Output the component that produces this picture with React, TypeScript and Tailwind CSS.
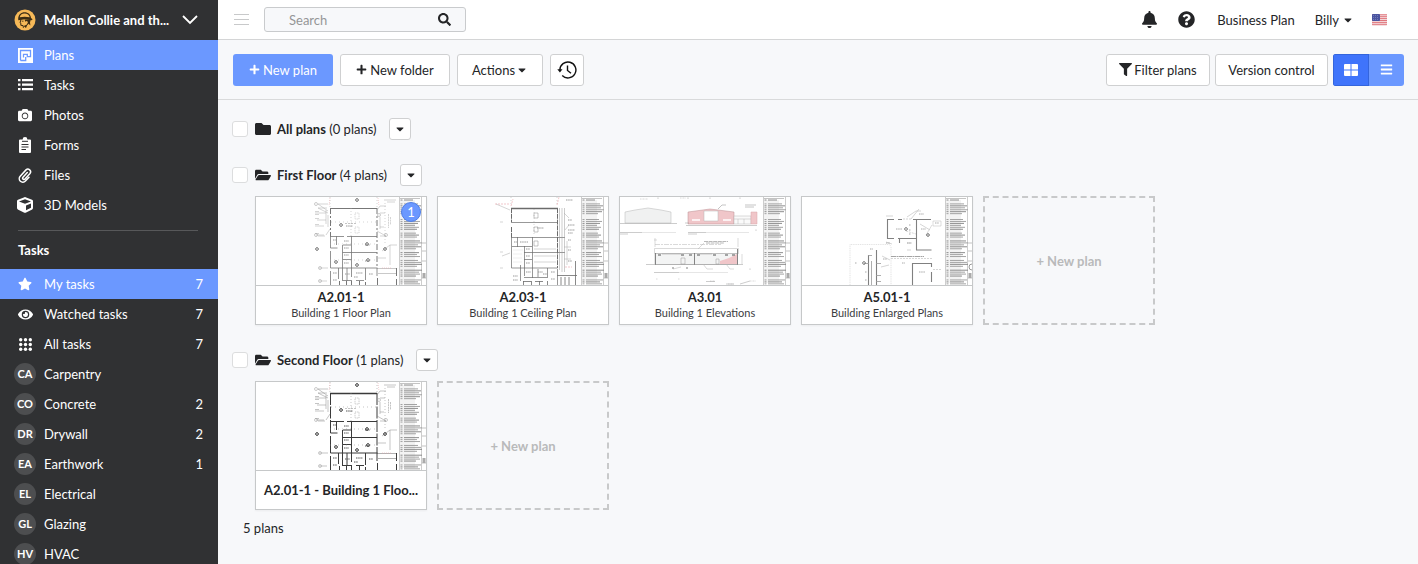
import clsx from 'clsx'
import React from 'react'
import {
  FaBars,
  FaBell,
  FaCamera,
  FaCaretDown,
  FaCube,
  FaEye,
  FaFilter,
  FaFolder,
  FaFolderOpen,
  FaPlus,
  FaQuestionCircle,
  FaSearch,
  FaStar
} from 'react-icons/fa'

const PlansIcon = () => (
  <svg width="15" height="15" viewBox="0 0 15 15" fill="none" aria-hidden="true">
    <rect width="15" height="15" fill="#fff" />
    <path
      d="M2.500 12.500v-10h10v6.200H9.300V6.300H5.500v3.200M2.500 12.500h5.200V9"
      stroke="#6b98ff"
      strokeWidth="1.300"
    />
  </svg>
)

const ListIcon = () => (
  <svg width="15" height="12" viewBox="0 0 15 12" fill="#fff" aria-hidden="true">
    <path d="M0 0h2.500v2.200H0zM4 0h11v2.200H4zM0 4.500h2.500v2.200H0zM4 4.500h11v2.200H4zM0 9h2.500v2.200H0zM4 9h11v2.200H4z" />
  </svg>
)

const FormsIcon = () => (
  <svg width="12" height="16" viewBox="0 0 12 16" aria-hidden="true">
    <path d="M1 2.500h2.600a2.400 2.400 0 0 1 4.800 0H11a1 1 0 0 1 1 1V15a1 1 0 0 1-1 1H1a1 1 0 0 1-1-1V3.500a1 1 0 0 1 1-1z" fill="#fff" />
    <path d="M3 4.300h6M2.500 7.500h7M2.500 10h7M2.500 12.500h4.500" stroke="#303133" strokeWidth="1" />
  </svg>
)

const ClipIcon = () => (
  <svg width="14" height="15" viewBox="0 0 14 15" fill="none" stroke="#fff" strokeLinecap="round" aria-hidden="true">
    <path
      d="M9.300 4.500L5 9.200a1.300 1.300 0 0 0 2 1.800l5-5.500A2.700 2.700 0 0 0 8 1.900L2.200 8.300a3.500 3.500 0 0 0 5.200 4.800L11 9.200"
      strokeWidth="1.500"
    />
  </svg>
)

const GridDotsIcon = () => (
  <svg width="13" height="13" viewBox="0 0 13 13" fill="#fff" aria-hidden="true">
    {[1.7, 6.5, 11.3].map((y) =>
      [1.7, 6.5, 11.3].map((x) => <circle key={`${x}-${y}`} cx={x} cy={y} r="1.700" />)
    )}
  </svg>
)

const TilesIcon = () => (
  <svg width="14" height="12" viewBox="0 0 14 12" fill="#fff" aria-hidden="true">
    <path d="M1 0h5.500v5.500H0V1a1 1 0 0 1 1-1zM7.500 0H13a1 1 0 0 1 1 1v4.500H7.500zM0 6.500h6.500V12H1a1 1 0 0 1-1-1zM7.500 6.500H14V11a1 1 0 0 1-1 1H7.500z" />
  </svg>
)

const HistoryIcon = () => (
  <svg width="20" height="18" viewBox="0 0 20 18" fill="none" stroke="#111" aria-hidden="true">
    <path d="M2.900 9A8 8 0 1 1 5.200 14.600" strokeWidth="1.400" />
    <path d="M0.300 8.300h5.200L2.900 11.500z" fill="#111" stroke="none" />
    <path d="M10.500 4.500v5l3.500 2.800" strokeWidth="1.400" />
  </svg>
)

const FlagIcon = () => (
  <svg width="15" height="12" viewBox="0 0 15 12" aria-hidden="true">
    <rect width="15" height="12" rx="1" fill="#f5dfe1" />
    <path d="M0 .8h15M0 2.700h15M0 4.600h15M0 6.500h15M0 8.400h15M0 10.300h15" stroke="#e0767d" strokeWidth="1" />
    <rect width="8" height="7" rx="1" fill="#4a55a0" />
    <path d="M1 1.500h6M1 3.500h6M1 5.500h6" stroke="#8c93c8" strokeWidth=".6" strokeDasharray="1 1" />
  </svg>
)

const ProjectLogo = () => (
  <svg width="22" height="22" viewBox="0 0 22 22" className="shrink-0" aria-hidden="true">
    <circle cx="11" cy="11" r="10.500" fill="#f6b958" />
    <path d="M4.200 9.600C4.400 5.600 7 3.200 10.600 3.200s6.200 2.300 6.400 5.900l1.600 1.200-1 .9-6.600-.9-6.700 1z" fill="#3a2c14" />
    <path d="M5.700 8.300c.4-2.300 2.100-3.800 4.800-3.800 2.900 0 4.800 1.500 5.200 3.800l-5-.6z" fill="#f6b958" />
    <path d="M7 10.500l-1 3.300.9.500-.1 2 2.300.3.300 2.200" fill="none" stroke="#3a2c14" strokeWidth="1" />
    <path d="M10.500 10.500l1 2.200 1.500-.9.900 1.600-1.300 2.400-3 1.100L12 19l1-2.500 1.600-1.700 1.800 1.600-.4-3 .8-2.900z" fill="#3a2c14" />
    <path d="M7.800 12.200h1.700" stroke="#3a2c14" strokeWidth=".8" />
  </svg>
)

interface NavItem {
  label: string
  icon?: React.ReactNode
  initials?: string
  count?: number
  active?: boolean
}

const mainNav: NavItem[] = [
  { label: 'Plans', icon: <PlansIcon />, active: true },
  { label: 'Tasks', icon: <ListIcon /> },
  { label: 'Photos', icon: <FaCamera size={14} /> },
  { label: 'Forms', icon: <FormsIcon /> },
  { label: 'Files', icon: <ClipIcon /> },
  { label: '3D Models', icon: <FaCube size={16} /> }
]

const taskNav: NavItem[] = [
  { label: 'My tasks', icon: <FaStar size={14} />, count: 7, active: true },
  { label: 'Watched tasks', icon: <FaEye size={15} />, count: 7 },
  { label: 'All tasks', icon: <GridDotsIcon />, count: 7 },
  { label: 'Carpentry', initials: 'CA' },
  { label: 'Concrete', initials: 'CO', count: 2 },
  { label: 'Drywall', initials: 'DR', count: 2 },
  { label: 'Earthwork', initials: 'EA', count: 1 },
  { label: 'Electrical', initials: 'EL' },
  { label: 'Glazing', initials: 'GL' },
  { label: 'HVAC', initials: 'HV' }
]

const NavLink: React.FC<{ item: NavItem }> = ({ item }) => (
  <a
    href="#"
    className={clsx(
      'flex h-[30px] items-center pr-[15px] pl-[14px]',
      item.active && 'bg-[#6b98ff]'
    )}
  >
    <span
      className={clsx(
        'flex size-[22px] shrink-0 items-center justify-center rounded-full',
        item.initials && 'bg-[#4d4e50] text-[11px] font-bold'
      )}
    >
      {item.icon ?? item.initials}
    </span>
    <span className="ml-2 flex-1">{item.label}</span>
    {item.count && <span>{item.count}</span>}
  </a>
)

const Sidebar = () => (
  <aside className="sticky top-0 h-screen w-[218px] shrink-0 overflow-hidden bg-[#303133] text-white">
    <button className="flex h-10 w-full items-center pr-5 pl-[14px] text-left font-bold">
      <ProjectLogo />
      <span className="ml-2 flex-1 whitespace-nowrap">Mellon Collie and th...</span>
      <svg width="16" height="10" viewBox="0 0 16 10" fill="none" aria-hidden="true">
        <path d="M1 1l7 7 7-7" stroke="#fff" strokeWidth="1.800" />
      </svg>
    </button>
    <nav>
      {mainNav.map((item) => (
        <NavLink key={item.label} item={item} />
      ))}
    </nav>
    <hr className="mt-[10px] mr-5 ml-[18px] border-[#57585a]" />
    <h2 className="flex h-[38px] items-center pl-[18px] font-bold">Tasks</h2>
    <nav>
      {taskNav.map((item) => (
        <NavLink key={item.label} item={item} />
      ))}
    </nav>
  </aside>
)

const TopBar = () => (
  <header className="flex h-10 items-center border-b border-[#d4d5d6] bg-white pr-[31px] pl-4">
    <button aria-label="Toggle menu">
      <svg width="15" height="12" viewBox="0 0 15 12" stroke="#c8c9ca" aria-hidden="true">
        <path d="M0 .5h15M0 5.500h15M0 10.500h15" />
      </svg>
    </button>
    <label className="ml-[15px] flex h-[25px] w-[202px] items-center rounded-[3px] border border-[#c9cbcd] bg-[#f7f8fa] pr-[14px] pl-6">
      <input
        type="text"
        placeholder="Search"
        aria-label="Search"
        className="w-0 flex-1 outline-none placeholder:text-[#959697]"
      />
      <FaSearch size={13} />
    </label>
    <div className="ml-auto flex items-center">
      <button aria-label="Notifications">
        <FaBell size={17} />
      </button>
      <button aria-label="Help" className="ml-5">
        <FaQuestionCircle size={17} />
      </button>
      <a href="#" className="ml-[22px]">
        Business Plan
      </a>
      <button className="ml-5 flex items-center gap-[3px]">
        Billy
        <FaCaretDown size={12} />
      </button>
      <button aria-label="Language" className="ml-[18px]">
        <FlagIcon />
      </button>
    </div>
  </header>
)

const outlineButton =
  'flex h-8 items-center justify-center rounded-[3px] border border-[#cfd0d1] bg-white'

const Toolbar = () => (
  <div className="flex h-[60px] items-center border-b border-[#d9dadb] pr-[14px] pl-[15px]">
    <div className="flex gap-[7px]">
      <button className="flex h-8 w-[100px] items-center justify-center gap-[3px] rounded-[3px] bg-[#6b98ff] text-white">
        <FaPlus size={11} />
        New plan
      </button>
      <button className={clsx(outlineButton, 'w-[110px] gap-[3px]')}>
        <FaPlus size={11} />
        New folder
      </button>
      <button className={clsx(outlineButton, 'w-[86px] gap-px')}>
        Actions
        <FaCaretDown size={12} />
      </button>
      <button aria-label="History" className={clsx(outlineButton, 'w-[34px]')}>
        <HistoryIcon />
      </button>
    </div>
    <div className="ml-auto flex gap-[5px]">
      <button className={clsx(outlineButton, 'w-[104px] gap-[2px]')}>
        <FaFilter size={13} />
        Filter plans
      </button>
      <button className={clsx(outlineButton, 'w-[113px]')}>Version control</button>
      <div className="flex h-8 overflow-hidden rounded-[3px] text-white">
        <button
          aria-label="Grid view"
          className="flex w-9 items-center justify-center border border-[#3465dc] bg-[#3f74fb]"
        >
          <TilesIcon />
        </button>
        <button aria-label="List view" className="flex w-[35px] items-center justify-center bg-[#6b98ff]">
          <FaBars size={13} />
        </button>
      </div>
    </div>
  </div>
)

// Line widths of the general notes printed down the right side of a sheet
const noteWidths = [
  9, 0, 14, 17, 15, 18, 16, 12, 0, 0, 13, 16, 14, 11, 15, 13, 0, 12, 15, 13, 0, 16, 18, 14, 17, 12,
  0, 15, 13, 16, 0, 14, 17, 18, 13, 0, 18, 15, 16, 12, 0, 17, 14, 16
]

const SheetNotes = () => (
  <g>
    <rect x="144" y="3" width="15" height="83" fill="#f3f3f3" />
    <path d="M143.500 0v88M165.500 0v88" stroke="#cdcdcd" />
    <path d="M144 1.500h20" stroke="#aaa" strokeWidth=".7" />
    {noteWidths.map((w, i) => (
      <path
        key={i}
        d={`M144.500 ${3 + i * 1.95}h2M148 ${3 + i * 1.95}h${w}`}
        stroke={i % 3 === 0 ? '#808080' : '#9a9a9a'}
        strokeWidth=".9"
        visibility={w ? 'visible' : 'hidden'}
      />
    ))}
    <path d="M166 46h4M166 54h4M166 64h4M166 81h4" stroke="#aaa" strokeWidth=".7" />
    <rect x="166.500" y="76" width="3" height="5" fill="#aaa" />
  </g>
)

const Target: React.FC<{ x: number; y: number }> = ({ x, y }) => (
  <path
    d={`M${x - 2} ${y}l2-2 2 2-2 2zM${x - 2} ${y}h4M${x} ${y - 2}v4`}
    strokeWidth=".6"
    fill="none"
  />
)

const FloorPlanDrawing: React.FC<{ dark?: boolean }> = ({ dark }) => (
  <g stroke={dark ? '#3a3a3a' : '#777'} fill="none">
    <path d="M74 11.500h47" strokeWidth={dark ? 1.4 : 1.2} />
    <path d="M74.500 11v28M121 11v60" strokeWidth="1" strokeDasharray={dark ? '12 1.5' : '6 2 2 2'} />
    <path
      d="M74 39.500h14M91 39.500h30M95.500 39v16M80.500 39v9M74.500 39v12h7M87 48h8M86.500 48v26M95 55.500h26M86.500 55.500h9M95.500 55v16M74.500 54v17h47M86.500 62.500h9M82.500 71v11M86.500 74v10M91 71v13M95.500 71v9M109.500 71v12M121 71v8M74.500 74v14M87 83.500h9M100 83.500h8"
      strokeWidth={dark ? 1 : 0.8}
    />
    <path d="M83.500 84v4M90.500 84v4M95.500 84v4M103.500 84v4M109.500 85v3M121.500 81v7M140.500 71v8M140.500 82v6" strokeWidth="1" />
    <path d="M122 76.500h18M121 71.500h19" strokeWidth=".4" />
    <g stroke={dark ? '#888' : '#aaa'} strokeWidth=".5">
      <path d="M74 0v10M121 0v10M129 6v40M95 11v28" strokeDasharray="1 2" />
      <path d="M62 7h10M62 11h9M59 16h11M61 23h9M59 29h9M62 39h7M60 38h8M63 71h9M63 84h8" />
      <path d="M124 9h6M124 16h5M124 30h4M124 39h6M128 3h12M131 5h8M122 61h8M134 48h7" />
      <path d="M62 7l10 7M62 11l10 5M70 38l4-6M124 9l-3 4M130 39l-9-5" />
      <path d="M132.500 17v14M134.500 20v8" strokeDasharray="2 .6" />
      <path d="M75 25h46M74 47h47M74 63h47" strokeDasharray="1 3" />
      <path d="M99 16h4v6h-4zM99 30h4v6h-4z" strokeDasharray="1 .8" />
      <path d="M59 14.500h4M59 17.500h4M59 21.500h4M59 27.500h4M59 36.500h4M70 13v14M72 18v12M124 20v12M126 54l8-6v20" />
    </g>
    <g stroke={dark ? '#555' : '#999'} strokeWidth="1" strokeDasharray="1.500 .7">
      <path d="M90 29h7M77 43h3M88 44h5M88 51h5M109 48h5M88 58h5M88 66h5M109 64h5M100 76h7M89 77h5M77 76h4M113 77h4M77 83h4M98 80h4" />
    </g>
    <path d="M89 26.500h11" stroke="#aaa" strokeDasharray="2 1" strokeWidth=".7" />
    <Target x={85} y={28} />
    <Target x={101} y={3} />
    <Target x={61} y={52} />
    <Target x={129} y={52} />
    <Target x={111} y={47} />
    <Target x={112} y={63} />
    <Target x={80} y={65} />
    <Target x={101} y={68} />
    <g strokeWidth=".5" stroke="#999">
      <circle cx="60" cy="7" r="1.500" />
      <circle cx="60" cy="38" r="1.500" />
      <circle cx="64" cy="71" r="1.500" />
      <circle cx="64" cy="84" r="1.500" />
      <circle cx="130" cy="38" r="1.500" />
      <circle cx="123" cy="18" r="1.500" />
    </g>
    <path d="M74 1l-1 8M122 1l1 8M126 71h10" stroke="#e7a3a8" strokeWidth=".5" strokeDasharray="1 1" />
  </g>
)

const CeilingPlanDrawing = () => (
  <g stroke="#6b6b6b" fill="none">
    <path d="M73 11.500h47" strokeWidth="1.400" />
    <path d="M73.500 11v14M73.500 30v10M119.500 11v60" strokeWidth="1" strokeDasharray="5 .8" />
    <path
      d="M73 25.500h46M73 40.500h54M94 55.500h33M94.500 40v31M79.500 40v10M86.500 49v30M73.500 40v31h46M74 49.500h20M86 55.500h8M86 62.500h8M82.500 68v16M86 80.500h24M94.500 71v10M109.500 71v9M100 72v8M119.500 72v16"
      strokeWidth=".7"
    />
    <path d="M121.500 11v62M124 11v64M126.500 11v64" stroke="#999" strokeWidth=".5" />
    <path d="M119 78.500h20M85 84.500h8M97 84.500h8M85.500 84v4M93.500 84v4M101.500 84v4M109.500 84v4M123 80v8M127 80v8M131 80v8M137.500 64v24" strokeWidth=".8" />
    <g stroke="#aaa" strokeWidth=".5">
      <path d="M73 0v9M119 0v9M96 12v26" strokeDasharray="1 2" />
      <path d="M96 16h4v5h-4zM96 30h4v5h-4zM96 44h4v5h-4z" stroke="#888" />
      <path d="M64 59l8-3M62 25h3M62 55h3M62 71h3M58 7l14 6M96 59h22M96 65h22M96 52h22" />
      <path d="M126 16l5 5M127 33l4-5M126 50h7M126 62h7M129 44v24" />
      <path d="M75 53h10M75 57h9M75 61h9M75 65h9" stroke="#ddd" />
    </g>
    <g stroke="#999" strokeWidth="1" strokeDasharray="1.500 .7">
      <path d="M99 31h7M88 52h4M88 59h4M88 66h4M88 75h5M100 75h5M105 77h4M75 79h5M75 83h5M113 75h4M113 82h4M130 23h4M130 28h7M130 33h7M130 36h5M130 43h3M130 53h3M130 64h4M128 3h7M76 45h3M82 45h8" />
    </g>
    <path d="M57 7h15M73 9l2-7M119 8l2-8M127 70h7" stroke="#e7a3a8" strokeWidth=".6" strokeDasharray="2 1" />
  </g>
)

const ElevationsDrawing = () => (
  <g fill="none" stroke="#b5b5b5" strokeWidth=".5">
    <path d="M5 26V15l10-2 13-2 13 2 10 2v11z" fill="#f0f1f1" />
    <path d="M0 26.500h57M0 35.500h22M0 37h8M68 35.500h18M68 37h9" stroke="#999" />
    <path d="M22 35.500h34M86 35.500h43" stroke="#ccc" />
    <path d="M68 27V15l22-3 24 3v12z" fill="#f0c6c9" stroke="#bb8f92" />
    <path d="M84 14h14v10H84z" fill="#fff" />
    <path d="M72 23h8M103 23h8" stroke="#fff" strokeWidth="1.400" />
    <path d="M114 19h17v8h-17z" fill="#fafafa" />
    <path d="M114 22h17M118 22v5M124 22v5" />
    <path d="M131 15h6v12h-6z" fill="#f0c6c9" stroke="#d9a5a9" />
    <path d="M66 28.500h71M65 26h4" stroke="#999" />
    <path d="M98 12l4-4h4M125 8h11M125 10h9" stroke="#888" />
    <path d="M34.500 51.500h84v5h-84z" fill="#fff" />
    <path d="M35 56.500h82v11H35z" fill="#f3f4f4" stroke="#999" />
    <path d="M100 67v-3l9-3 8-4v10z" fill="#f0c6c9" stroke="none" />
    <path d="M35.500 56v12M74.500 56v12M117.500 52v16" stroke="#777" strokeWidth=".9" />
    <path d="M26 67.500h97M34 75.500h25" stroke="#999" />
    <path d="M59 75.500h49" stroke="#ccc" />
    <path d="M38 58h3M61 58h3M69 58h3M77 58h3M93 58h3M105 58h3M112 58h3" stroke="#888" strokeWidth="1.600" />
    <path d="M61 61h4v6h-4zM96 62h3v5h-3zM42 57h19M80 57h12" stroke="#999" />
    <path d="M35 47.500h66" strokeDasharray="5 1 2 1" />
    <path d="M84 44.500h24M86 46h18" stroke="#888" strokeWidth=".6" strokeDasharray="4 .6" />
    <path d="M84 46l-6 6M61 70l-8 2M83 67l4 5h6M106 67l4 5h4M122 57v10M35 41v9M118 41v9M34 43h3" />
    <path d="M20 2h8M60 1h6M36 82h2M58 82h2M90 84h5M108 87h6M130 84h6" strokeDasharray="1 .5" />
    <path d="M86 84.500h9M106 87h8M120 87l10-3" stroke="#999" />
    <g fill="#aaa" stroke="none">
      <circle cx="38" cy="1" r=".6" />
      <circle cx="68" cy="1" r=".6" />
      <circle cx="90" cy="1" r=".6" />
      <circle cx="120" cy="1" r=".6" />
      <circle cx="136" cy="33" r=".6" />
      <circle cx="130" cy="72" r=".6" />
      <circle cx="53" cy="71" r="1" />
      <circle cx="67" cy="71" r="1" />
    </g>
  </g>
)

const EnlargedPlansDrawing = () => (
  <g fill="none" stroke="#808080">
    <path
      d="M92 22.500h-6.500v19H92M96 22.500h4M111 22.500h18M114.500 22v31h15M96 41.500h18M97.500 41v5M66.500 58v30M74.500 53v35M110.500 88V66.500h19V70M129.500 75v10"
      strokeWidth="1.100"
    />
    <path d="M66 58.500h4M62 66.500h5M74 66.500h5M74 78.500h5M69.500 64v24M74 84.500h5" stroke="#999" strokeWidth=".8" />
    <path d="M48 88V47.500h38q3 0 3 3V88" stroke="#ccc" strokeWidth=".6" strokeDasharray="1 .8" />
    <path d="M89 59.500h33" stroke="#999" strokeWidth=".9" strokeDasharray="5 .5 2 .5" />
    <path d="M89 61.500h42M131 72.500h9M101 22h9M104 34l10 3" stroke="#bbb" strokeWidth=".6" strokeDasharray="2 1" />
    <path d="M105 20l9-6h5M109 22l8-10M118 27l10 6M80 59l8 4M79 70l8-2M84 19h7M105 46h5M105 53h4M84 45l6 2" stroke="#aaa" strokeWidth=".5" />
    <path d="M131 24h8v5h-8zM130 28l-6 10" stroke="#bbb" strokeWidth=".5" />
    <g strokeWidth="1" stroke="#aaa" strokeDasharray="1.500 .7">
      <path d="M94 32h6M107 28h2M107 33h2M107 37h2M117 17h5M119 32h5M124 38h3M133 26h4M84 46h4M105 46h4M100 66h3M53 66h2M63 75h2M68 52h3M81 62h4M117 75h6M63 83h2" />
    </g>
    <Target x={104} y={32} />
    <Target x={126} y={38} />
    <Target x={62} y={66} />
    <path d="M170 67a3 3 0 0 0 0 6" strokeWidth=".8" />
  </g>
)

interface Plan {
  name: string
  description?: string
  badge?: number
  drawing: React.ReactNode
}

interface Folder {
  name: string
  plans: Plan[]
  empty?: boolean
}

const folders: Folder[] = [
  { name: 'All plans', plans: [], empty: true },
  {
    name: 'First Floor',
    plans: [
      { name: 'A2.01-1', description: 'Building 1 Floor Plan', badge: 1, drawing: <FloorPlanDrawing /> },
      { name: 'A2.03-1', description: 'Building 1 Ceiling Plan', drawing: <CeilingPlanDrawing /> },
      { name: 'A3.01', description: 'Building 1 Elevations', drawing: <ElevationsDrawing /> },
      { name: 'A5.01-1', description: 'Building Enlarged Plans', drawing: <EnlargedPlansDrawing /> }
    ]
  },
  {
    name: 'Second Floor',
    plans: [{ name: 'A2.01-1 - Building 1 Floo...', drawing: <FloorPlanDrawing dark /> }]
  }
]

const PlanCard: React.FC<{ plan: Plan }> = ({ plan }) => (
  <a
    href="#"
    className="relative flex h-[129px] w-[172px] flex-col border border-[#c6c8c9] bg-white text-center shadow-xs"
  >
    <svg viewBox="0 0 170 88" className="h-[88px] w-full shrink-0" aria-hidden="true">
      {plan.drawing}
      <SheetNotes />
    </svg>
    {plan.badge && (
      <span className="absolute top-[5px] right-[5px] flex size-5 items-center justify-center rounded-full border border-[#4f7fe8] bg-[#6b98ff] text-white">
        {plan.badge}
      </span>
    )}
    <div className="flex flex-1 flex-col justify-center border-t border-[#c6c8c9] whitespace-nowrap">
      <span className="leading-4 font-bold">{plan.name}</span>
      {plan.description && (
        <span className="text-[11px] leading-4 text-[#3c3d3f]">{plan.description}</span>
      )}
    </div>
  </a>
)

const FolderSection: React.FC<{ folder: Folder }> = ({ folder }) => {
  const FolderIcon = folder.empty ? FaFolder : FaFolderOpen
  return (
    <section>
      <div className="flex h-[22px] items-center">
        <input
          type="checkbox"
          aria-label={`Select ${folder.name}`}
          className="size-4 appearance-none rounded-[3px] border border-[#dcddde] bg-white"
        />
        <FolderIcon size={16} className="ml-[7px]" />
        <h3 className="ml-[6px]">
          <b>{folder.name}</b> ({folder.plans.length} plans)
        </h3>
        <button
          aria-label={`${folder.name} actions`}
          className="ml-[13px] flex size-[22px] items-center justify-center rounded-[3px] border border-[#cfd0d1] bg-white"
        >
          <FaCaretDown size={12} />
        </button>
      </div>
      {!folder.empty && (
        <div className="mt-[10px] ml-[23px] flex flex-wrap gap-[10px]">
          {folder.plans.map((plan) => (
            <PlanCard key={plan.name} plan={plan} />
          ))}
          <button className="h-[129px] w-[172px] border-2 border-dashed border-[#c8c9ca] font-bold text-[#b9babb]">
            + New plan
          </button>
        </div>
      )}
    </section>
  )
}

const App: React.FC = () => {
  return (
    <div className="flex min-h-screen bg-[#f7f8fa] font-['Lato',sans-serif] text-[13px] leading-5 text-[#242527]">
      <Sidebar />
      <div className="min-w-0 flex-1">
        <TopBar />
        <Toolbar />
        <main className="px-[14px] pt-[18px] pb-6">
          <div className="flex flex-col gap-6">
            {folders.map((folder) => (
              <FolderSection key={folder.name} folder={folder} />
            ))}
          </div>
          <p className="mt-2 ml-[11px]">5 plans</p>
        </main>
      </div>
    </div>
  )
}

export default App
